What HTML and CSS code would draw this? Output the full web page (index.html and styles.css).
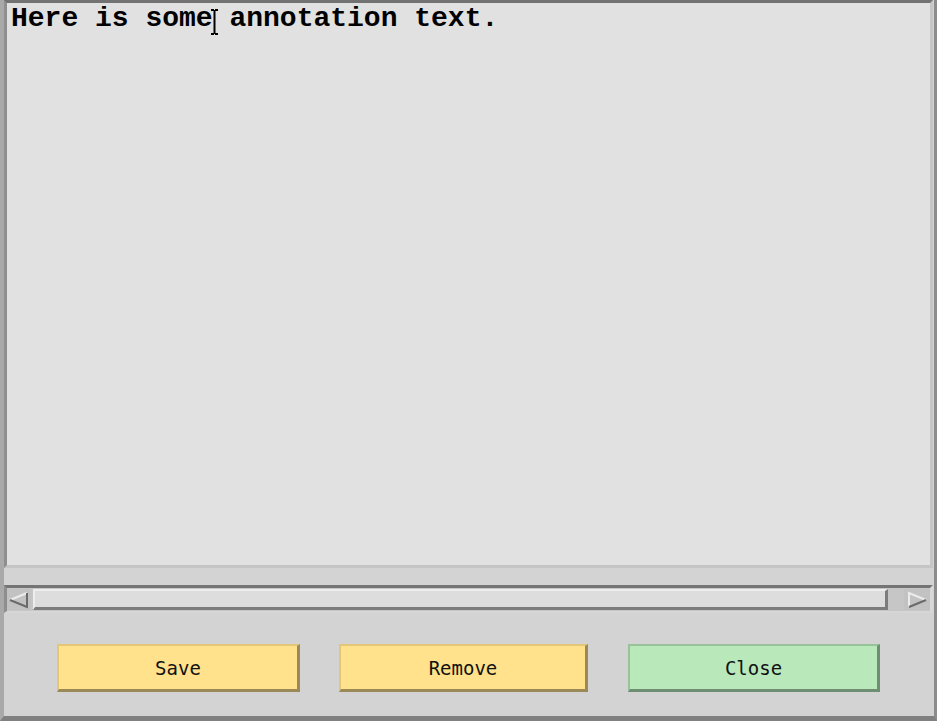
FILE: index.html
```html
<!DOCTYPE html>
<html>
<head>
<meta charset="utf-8">
<link rel="stylesheet" href="styles.css">
</head>
<body>
<div class="app">
  <div class="editor">
    <div class="text">Here is some annotation text.</div>
    <svg class="ibeam" width="9" height="26" viewBox="0 0 9 26">
      <path d="M1 1h3M5 1h3M4.5 1v24M1 25h3M5 25h3" stroke="#000" stroke-width="2" fill="none"/>
    </svg>
  </div>
  <div class="hscroll">
    <div class="arrow">
      <svg width="24" height="20" viewBox="0 0 24 20">
        <path d="M20 3 L3 10" stroke="#ececec" stroke-width="2" fill="none"/>
        <path d="M3 10 L20 17 L20 3" stroke="#6a6a6a" stroke-width="2" fill="none"/>
      </svg>
    </div>
    <div class="thumb"></div>
    <div class="arrow right">
      <svg width="26" height="20" viewBox="0 0 26 20">
        <path d="M5 17 L5 3 L22 10" stroke="#ececec" stroke-width="2" fill="none"/>
        <path d="M22 10 L5 17" stroke="#6a6a6a" stroke-width="2" fill="none"/>
      </svg>
    </div>
  </div>
  <div class="buttons">
    <div class="btn yellow save">Save</div>
    <div class="btn yellow remove">Remove</div>
    <div class="btn green close">Close</div>
  </div>
</div>
</body>
</html>
```

FILE: styles.css
```css
html, body {
  margin: 0;
  padding: 0;
  background: #d3d3d3;
}
.app {
  width: 937px;
  height: 721px;
  box-sizing: border-box;
  display: flex;
  flex-direction: column;
  background: #d3d3d3;
  border-left: 4px solid #a9a9a9;
  border-right: 3px solid #8c8c8c;
  border-bottom: 5px solid #808080;
}
.editor {
  position: relative;
  height: 568px;
  box-sizing: border-box;
  margin-right: 1px;
  background: #e1e1e1;
  border-top: 3px solid #727272;
  border-left: 3px solid #8e8e8e;
  border-right: 3px solid #c6c6c6;
  border-bottom: 3px solid #c4c4c4;
  padding: 1px 4px;
}
.text {
  font-family: "Liberation Mono", "Courier New", monospace;
  font-weight: bold;
  font-size: 28px;
  line-height: 30px;
  color: #000;
  white-space: pre;
}
.ibeam {
  position: absolute;
  left: 203px;
  top: 6px;
}
.hscroll {
  margin-top: 17px;
  margin-right: 1px;
  height: 28px;
  box-sizing: border-box;
  display: flex;
  align-items: stretch;
  background: #c6c6c6;
  border-top: 3px solid #747474;
  border-left: 3px solid #8e8e8e;
  border-right: 3px solid #d8d8d8;
  border-bottom: 2px solid #d6d6d6;
  padding: 1px 0 1px 0;
}
.arrow {
  width: 24px;
  display: flex;
  align-items: center;
  justify-content: center;
  background: #c2c2c2;
}
.arrow.right {
  width: 26px;
  margin-left: 16px;
}
.thumb {
  flex: 1;
  margin-left: 2px;
  box-sizing: border-box;
  background: #dddddd;
  border-top: 2px solid #ededed;
  border-left: 2px solid #ededed;
  border-right: 3px solid #7c7c7c;
  border-bottom: 3px solid #7c7c7c;
}
.buttons {
  flex: 1;
  display: flex;
  align-items: flex-start;
  padding-top: 31px;
}
.btn {
  height: 48px;
  box-sizing: border-box;
  display: flex;
  align-items: center;
  justify-content: center;
  font-family: "DejaVu Sans Mono", monospace;
  font-size: 19px;
  color: #111;
}
.yellow {
  background: #ffe28b;
  border-top: 2px solid #e3c777;
  border-left: 2px solid #e3c777;
  border-right: 3px solid #9b8a57;
  border-bottom: 3px solid #9b8a57;
}
.green {
  background: #b9e8bb;
  border-top: 2px solid #98c39a;
  border-left: 2px solid #98c39a;
  border-right: 3px solid #6f8e71;
  border-bottom: 3px solid #6f8e71;
}
.save {
  margin-left: 53px;
  width: 243px;
}
.remove {
  margin-left: 39px;
  width: 249px;
}
.close {
  margin-left: 40px;
  width: 252px;
}
```
